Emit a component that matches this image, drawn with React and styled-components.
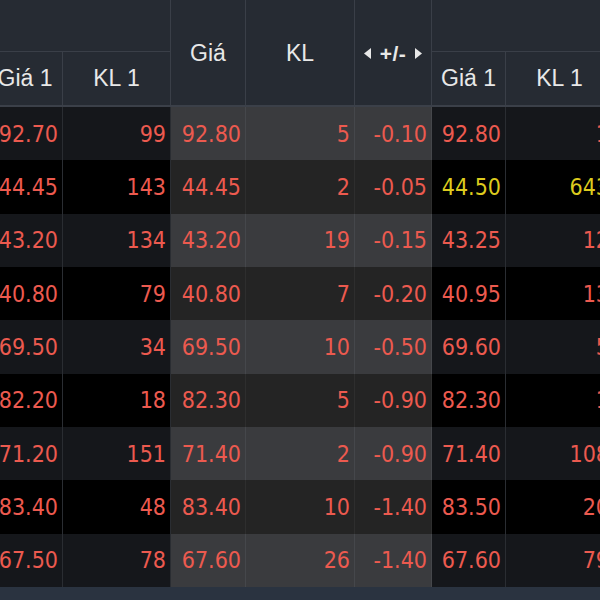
import React from 'react';
import styled, { createGlobalStyle } from 'styled-components';

const GlobalStyle = createGlobalStyle`
    html, body {
        margin: 0;
        padding: 0;
        background: #000;
        overflow: hidden;
    }
`;

const COLS = '75px 108px 75px 109px 77px 74px 108px';

const Board = styled.div`
    width: 600px;
    height: 600px;
    overflow: hidden;
    display: flex;
    flex-direction: column;
    background: #000;
`;

const Table = styled.div`
    margin-left: -12px;
    width: 626px;
`;

const Header = styled.div`
    display: grid;
    grid-template-columns: ${COLS};
    grid-template-rows: 52px 53px;
    background: #262b33;
    border-bottom: 2px solid #3b4049;
    font-family: "Liberation Sans", Arial, sans-serif;
    font-size: 23px;
    color: #e8e8e8;
`;

const HeadCell = styled.div`
    display: flex;
    align-items: center;
    justify-content: center;
    gap: 9px;
    border-right: 1px solid #3a3f48;
    border-bottom: ${p => (p.group ? '1px solid #3a3f48' : 'none')};
    grid-column: ${p => p.span || 'auto'};
    grid-row: ${p => p.rows || 'auto'};
    padding-top: ${p => (p.tall ? '2px' : '0')};
    box-sizing: border-box;
`;

const Sign = styled.span`
    font-size: 21px;
    font-weight: bold;
    letter-spacing: 0.5px;
`;

const Row = styled.div`
    display: grid;
    grid-template-columns: ${COLS};
    height: 53.33px;
`;

const Cell = styled.div`
    display: flex;
    align-items: center;
    justify-content: flex-end;
    padding-right: 4px;
    box-sizing: border-box;
    font-family: "DejaVu Sans Condensed", "DejaVu Sans", Verdana, sans-serif;
    font-stretch: condensed;
    font-size: 23px;
    color: ${p => (p.yellow ? '#ddcb1e' : '#ec5a4f')};
    background: ${p =>
        p.mid
            ? (p.odd ? '#3a3b3e' : '#242424')
            : (p.odd ? '#15171b' : '#000')};
    border-right: 1px solid ${p => (p.mid ? (p.odd ? '#45474b' : '#2e2e2e') : '#2a2d32')};
`;

const Footer = styled.div`
    flex: 1;
    background: #2a3340;
`;

const Arrow = ({ dir }) => (
    <svg width="7" height="11" viewBox="0 0 7 11">
        {dir === 'left'
            ? <polygon points="7,0 7,11 0,5.5" fill="#e8e8e8" />
            : <polygon points="0,0 0,11 7,5.5" fill="#e8e8e8" />}
    </svg>
);

const rows = [
    ['92.70', '99', '92.80', '5', '-0.10', '92.80', '1'],
    ['44.45', '143', '44.45', '2', '-0.05', '44.50', '643', true],
    ['43.20', '134', '43.20', '19', '-0.15', '43.25', '12'],
    ['40.80', '79', '40.80', '7', '-0.20', '40.95', '13'],
    ['69.50', '34', '69.50', '10', '-0.50', '69.60', '5'],
    ['82.20', '18', '82.30', '5', '-0.90', '82.30', '1'],
    ['71.20', '151', '71.40', '2', '-0.90', '71.40', '108'],
    ['83.40', '48', '83.40', '10', '-1.40', '83.50', '20'],
    ['67.50', '78', '67.60', '26', '-1.40', '67.60', '79'],
];

const App = () => {
    return (
        <Board>
            <GlobalStyle />
            <Table>
                <Header>
                    <HeadCell group span="1 / 3" rows="1" />
                    <HeadCell span="3" rows="1 / 3" tall>Giá</HeadCell>
                    <HeadCell span="4" rows="1 / 3" tall>KL</HeadCell>
                    <HeadCell span="5" rows="1 / 3" tall>
                        <Arrow dir="left" />
                        <Sign>+/-</Sign>
                        <Arrow dir="right" />
                    </HeadCell>
                    <HeadCell group span="6 / 8" rows="1" />
                    <HeadCell span="1" rows="2">Giá 1</HeadCell>
                    <HeadCell span="2" rows="2">KL 1</HeadCell>
                    <HeadCell span="6" rows="2">Giá 1</HeadCell>
                    <HeadCell span="7" rows="2">KL 1</HeadCell>
                </Header>
                {rows.map((r, i) => {
                    const odd = i % 2 === 0;
                    return (
                        <Row key={i}>
                            <Cell odd={odd}>{r[0]}</Cell>
                            <Cell odd={odd}>{r[1]}</Cell>
                            <Cell odd={odd} mid>{r[2]}</Cell>
                            <Cell odd={odd} mid>{r[3]}</Cell>
                            <Cell odd={odd} mid>{r[4]}</Cell>
                            <Cell odd={odd} yellow={r[7]}>{r[5]}</Cell>
                            <Cell odd={odd} yellow={r[7]}>{r[6]}</Cell>
                        </Row>
                    );
                })}
            </Table>
            <Footer />
        </Board>
    );
};

export default App;
